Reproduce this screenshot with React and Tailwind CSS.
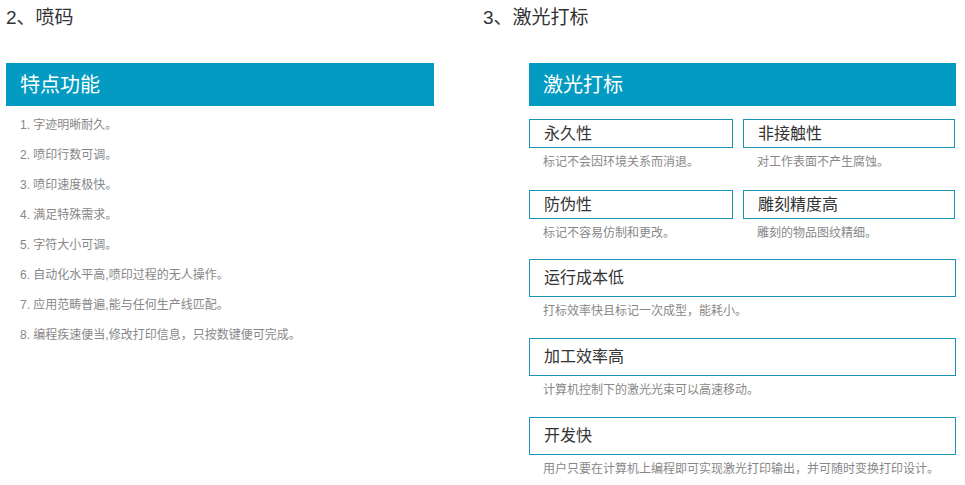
import React from "react";

const items = [
  "1. 字迹明晰耐久。",
  "2. 喷印行数可调。",
  "3. 喷印速度极快。",
  "4. 满足特殊需求。",
  "5. 字符大小可调。",
  "6. 自动化水平高,喷印过程的无人操作。",
  "7. 应用范畴普遍,能与任何生产线匹配。",
  "8. 编程疾速便当,修改打印信息，只按数键便可完成。",
];

const Box = ({ title, desc, tall }) => (
  <div>
    <div className={`border border-[#1a93b8] px-[14px] flex items-center text-[16px] text-[#333] ${tall ? "h-[38px]" : "h-[29px]"}`}>{title}</div>
    <p className="pl-[14px] text-[12px] text-[#888] mt-[6px] leading-[16px]">{desc}</p>
  </div>
);

export default function App() {
  const font = { fontFamily: '"Liberation Sans", "Noto Sans CJK SC", sans-serif' };
  return (
    <div style={font} className="w-[965px] h-[485px] bg-white flex">
      <div className="w-[428px] ml-[6px]">
        <h2 className="text-[19px] text-[#333] leading-[22px] mt-[7px]">2、喷码</h2>
        <div className="mt-[34px] h-[43px] bg-[#039bc2] text-white text-[20px] flex items-center px-[14px]">特点功能</div>
        <ul className="pl-[14px] mt-[11px]">
          {items.map((t) => (
            <li key={t} className="text-[12px] text-[#888] h-[30px] leading-[16px]">{t}</li>
          ))}
        </ul>
      </div>
      <div className="w-[427px] ml-[95px]">
        <h2 className="text-[19px] text-[#333] leading-[22px] mt-[7px] -ml-[46px]">3、激光打标</h2>
        <div className="mt-[34px] h-[43px] bg-[#039bc2] text-white text-[20px] flex items-center px-[14px]">激光打标</div>
        <div className="grid grid-cols-[204px_212px] gap-x-[10px] gap-y-[20px] mt-[13px]">
          <Box title="永久性" desc="标记不会因环境关系而消退。" />
          <Box title="非接触性" desc="对工作表面不产生腐蚀。" />
          <Box title="防伪性" desc="标记不容易仿制和更改。" />
          <Box title="雕刻精度高" desc="雕刻的物品图纹精细。" />
        </div>
        <div className="flex flex-col gap-[19px] mt-[18px]">
          <Box tall title="运行成本低" desc="打标效率快且标记一次成型，能耗小。" />
          <Box tall title="加工效率高" desc="计算机控制下的激光光束可以高速移动。" />
          <Box tall title="开发快" desc="用户只要在计算机上编程即可实现激光打印输出，并可随时变换打印设计。" />
        </div>
      </div>
    </div>
  );
}
